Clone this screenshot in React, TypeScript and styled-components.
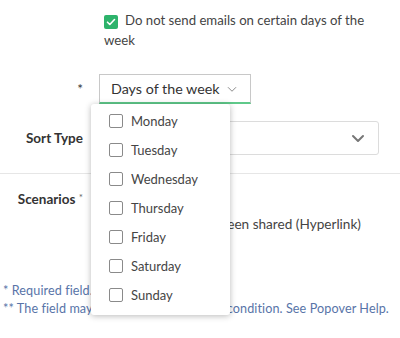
import React from "react";
import styled, { createGlobalStyle } from "styled-components";

const GlobalStyle = createGlobalStyle`
  body {
    margin: 0;
    background: #fff;
    font-family: Lato, "Noto Sans", sans-serif;
    color: #4a4a4a;
  }
`;

const Page = styled.div`
  width: 400px;
  height: 338px;
  overflow: hidden;
  position: relative;
`;

const CheckLine = styled.div`
  margin-left: 104px;
  width: 262px;
  font-size: 13.2px;
  line-height: 20px;
  padding-top: 10px;
  color: #444;
`;

const GreenBox = styled.span`
  display: inline-flex;
  align-items: center;
  justify-content: center;
  width: 14px;
  height: 14px;
  border-radius: 2px;
  background: #2db36b;
  vertical-align: -2px;
  margin-right: 7px;
`;

const Row = styled.div<{ $mt?: number }>`
  display: flex;
  align-items: center;
  margin-top: ${(p) => p.$mt ?? 0}px;
`;

const Label = styled.div<{ $bold?: boolean }>`
  width: 83px;
  flex: none;
  text-align: right;
  font-size: 13.5px;
  font-weight: ${(p) => (p.$bold ? 700 : 400)};
  color: #333;
  margin-right: 16px;
  white-space: nowrap;
`;

const Star = styled.span`
  font-size: 10px;
  font-weight: 400;
  color: #666;
  vertical-align: 3px;
`;

const DaysWrap = styled.div`
  position: relative;
`;

const DaysSelect = styled.div`
  display: flex;
  align-items: center;
  gap: 6px;
  height: 27px;
  padding: 0 12px 0 11px;
  border: 1px solid #c8c8c8;
  border-bottom: 2px solid #5fc98a;
  font-size: 14.3px;
  color: #333;
  white-space: nowrap;
`;

const Menu = styled.div`
  position: absolute;
  left: -8px;
  top: 30px;
  width: 139px;
  background: #fff;
  border-radius: 3px;
  box-shadow: 0 1px 6px rgba(0, 0, 0, 0.28);
  padding: 2px 0 6px;
  z-index: 5;
`;

const Item = styled.div`
  display: flex;
  align-items: center;
  height: 29px;
  padding-left: 18px;
  font-size: 13px;
  color: #454545;
`;

const Box = styled.span`
  width: 12px;
  height: 12px;
  border: 1px solid #8a8a8a;
  border-radius: 2px;
  margin-right: 8px;
  flex: none;
`;

const SortSelect = styled.div`
  flex: 1;
  margin-right: 21px;
  height: 32px;
  border: 1px solid #dcdcdc;
  border-radius: 3px;
  display: flex;
  align-items: center;
  justify-content: flex-end;
  padding-right: 12px;
`;

const Divider = styled.div`
  height: 1px;
  background: #e6e6e6;
  margin-top: 18px;
`;

const Option = styled.div`
  font-size: 13.6px;
  line-height: 16px;
  color: #444;
  margin-top: 9px;
  text-align: right;
  padding-right: 39px;
  white-space: nowrap;
`;

const Footer = styled.div`
  padding-left: 3px;
  margin-top: 50px;
  font-size: 12.6px;
  letter-spacing: 0.1px;
  line-height: 18px;
  color: #5874a8;
  white-space: nowrap;
`;

const Chevron = ({ size, color, w }: { size: number; color: string; w: number }) => (
  <svg width={size} height={size} viewBox="0 0 16 16" fill="none">
    <path d="M3 6l5 5 5-5" stroke={color} strokeWidth={w} strokeLinecap="round" strokeLinejoin="round" />
  </svg>
);

const days = ["Monday", "Tuesday", "Wednesday", "Thursday", "Friday", "Saturday", "Sunday"];

const App: React.FC = () => (
  <Page>
    <GlobalStyle />
    <CheckLine>
      <GreenBox>
        <svg width="10" height="10" viewBox="0 0 10 10">
          <path d="M1.5 5.2l2.3 2.3 4.7-5" stroke="#fff" strokeWidth="1.6" fill="none" strokeLinecap="round" strokeLinejoin="round" />
        </svg>
      </GreenBox>
      Do not send emails on certain days of the week
    </CheckLine>
    <Row $mt={24}>
      <Label>*</Label>
      <DaysWrap>
        <DaysSelect>
          Days of the week
          <Chevron size={12} color="#888" w={1.3} />
        </DaysSelect>
        <Menu>
          {days.map((d) => (
            <Item key={d}>
              <Box />
              {d}
            </Item>
          ))}
        </Menu>
      </DaysWrap>
    </Row>
    <Row $mt={17}>
      <Label $bold>Sort Type</Label>
      <SortSelect>
        <Chevron size={16} color="#777" w={2} />
      </SortSelect>
    </Row>
    <Divider />
    <Row $mt={17}>
      <Label $bold>
        Scenarios <Star>*</Star>
      </Label>
    </Row>
    <Option>Content has been shared (Hyperlink)</Option>
    <Footer>
      <div>* Required field.</div>
      <div>** The field may be required based on a condition. See Popover Help.</div>
    </Footer>
  </Page>
);

export default App;
